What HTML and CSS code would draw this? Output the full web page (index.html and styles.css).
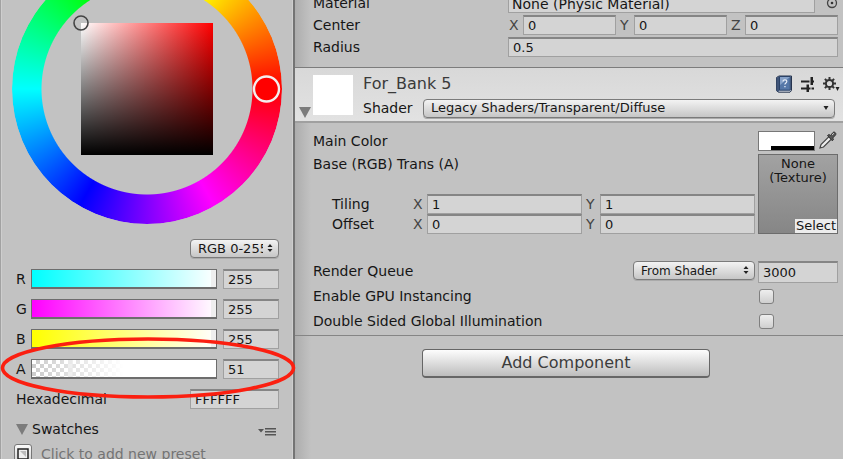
FILE: index.html
```
<!DOCTYPE html>
<html lang="en">
<head>
<meta charset="utf-8">
<title>Inspector</title>
<link rel="stylesheet" href="styles.css">
</head>
<body>
<main class="app">
  <section class="picker" aria-label="Color">
    <div class="wheel">
      <div class="hue"></div>
      <div class="shade"></div>
      <svg class="handles" viewBox="0 0 270 270" aria-hidden="true">
        <circle cx="69" cy="69" r="7" fill="none" stroke="#444" stroke-width="1.6"/>
        <circle cx="254.500" cy="135" r="12.500" fill="#f00" stroke="#f4eeee" stroke-width="2.400"/>
      </svg>
    </div>

    <div class="mode">
      <span class="dropdown mode-select">
        <select aria-label="Color mode"><option>RGB 0-255</option></select>
        <svg class="arrows" viewBox="0 0 6 10" aria-hidden="true"><path d="M3 1 5.500 4H.5zM3 9 .5 6h5z"/></svg>
      </span>
    </div>

    <div class="channels">
      <div class="channel">
        <label for="r">R</label>
        <input class="slider cyan" id="r" type="range" min="0" max="255" value="255">
        <input class="field" type="text" aria-label="R value" value="255">
      </div>
      <div class="channel">
        <label for="g">G</label>
        <input class="slider magenta" id="g" type="range" min="0" max="255" value="255">
        <input class="field" type="text" aria-label="G value" value="255">
      </div>
      <div class="channel">
        <label for="b">B</label>
        <input class="slider yellow" id="b" type="range" min="0" max="255" value="255">
        <input class="field" type="text" aria-label="B value" value="255">
      </div>
      <div class="channel">
        <label for="a">A</label>
        <input class="slider alpha" id="a" type="range" min="0" max="255" value="51">
        <input class="field" type="text" aria-label="A value" value="51">
        <svg class="marker" viewBox="0 0 296 64" aria-hidden="true"><ellipse cx="148" cy="32" rx="145.500" ry="29" fill="none" stroke="#fb1f10" stroke-width="3.600"/></svg>
      </div>
      <div class="hex">
        <label for="hex">Hexadecimal</label>
        <input class="field" id="hex" type="text" value="FFFFFF">
      </div>
    </div>

    <div class="swatches">
      <svg class="fold" viewBox="0 0 12 11" aria-hidden="true"><path d="M0 0h12L6 11z"/></svg>
      <span>Swatches</span>
      <svg class="menu" viewBox="0 0 18 10" aria-hidden="true"><path d="M0 2h6L3 5.500zM7 1h11v1.500H7zM7 4h11v1.500H7zM7 7h11v1.500H7z"/></svg>
    </div>
    <div class="preset">
      <button class="add-preset" type="button" aria-label="Add preset">
        <svg viewBox="0 0 12 12" aria-hidden="true"><path d="M1 1h10v10H1z" fill="#eee" stroke="#222" stroke-width="1.500"/><path d="M3 3l6 6V3z" fill="#bbb"/></svg>
      </button>
      <span>Click to add new preset</span>
    </div>
  </section>

  <section class="inspector" aria-label="Inspector">
    <div class="collider">
      <div class="prop">
        <label for="mat">Material</label>
        <div class="object">
          <input class="field name" id="mat" type="text" value="None (Physic Material)">
          <svg class="target" viewBox="0 0 12 12" aria-hidden="true"><circle cx="6" cy="6" r="4.500" fill="none" stroke="#444" stroke-width="1.300"/><circle cx="6" cy="6" r="1.300" fill="#333"/></svg>
        </div>
      </div>
      <div class="prop">
        <span>Center</span>
        <div class="vector">
          <label for="cx">X</label><input class="field" id="cx" type="text" value="0">
          <label for="cy">Y</label><input class="field" id="cy" type="text" value="0">
          <label for="cz">Z</label><input class="field" id="cz" type="text" value="0">
        </div>
      </div>
      <div class="prop">
        <label for="radius">Radius</label>
        <input class="field" id="radius" type="text" value="0.5">
      </div>
    </div>

    <header class="material-head">
      <svg class="fold" viewBox="0 0 12 11" aria-hidden="true"><path d="M0 0h12L6 11z"/></svg>
      <div class="thumb"></div>
      <div class="head-main">
        <div class="title-row">
          <h2>For_Bank 5</h2>
          <svg class="icon book" viewBox="0 0 18 18" aria-hidden="true">
            <path d="M1.500 2.500 4 1h12.500v14.500L15 17.200H3.500l-2-1.500z" fill="#d9dde5" stroke="#26344e"/>
            <path d="M1.500 2.500 4.500 1.500v14L3.500 17l-2-1.300z" fill="#3f5478"/>
            <path d="M4.500 1.500h10.800v13.700H4.500z" fill="#5577a8" stroke="#2b4267"/>
            <path d="M5 2h10L5 10z" fill="#86a1c8"/>
            <path d="M8 6.500c0-2.400 4-2.300 3.800 0-.1 1.500-1.900 1.400-1.900 3" fill="none" stroke="#e8eef8" stroke-width="1.200"/>
            <path d="M9.300 11h1.300v1.300H9.300z" fill="#e8eef8"/>
          </svg>
          <svg class="icon presets" viewBox="0 0 14 15" aria-hidden="true"><path d="M0 3.500h8.500v2H0zM9.500 0H12v8H9.500zM12 3.500h1v2h-1zM0 10.500h4v2H0zM5.500 7.500H8V15H5.500zM4 10.500h5.500v2H4zM10.500 10.500H13v2h-2.500z" fill="#222"/></svg>
          <svg class="icon gear" viewBox="0 0 17 15" aria-hidden="true"><circle cx="6.500" cy="6.500" r="3.600" fill="none" stroke="#333" stroke-width="2"/><path d="M6.500 0v2.500M6.500 10.500V13M0 6.500h2.500M10.500 6.500H13M1.900 1.900l1.800 1.800M9.300 9.300l1.800 1.800M1.900 11.100l1.800-1.800M9.300 3.700l1.800-1.800" stroke="#333" stroke-width="2"/><path d="M12.500 10h4l-2 4z" fill="#222"/></svg>
        </div>
        <div class="shader-row">
          <label for="shader">Shader</label>
          <span class="dropdown">
            <select id="shader"><option>Legacy Shaders/Transparent/Diffuse</option></select>
            <svg class="arrows" viewBox="0 0 6 10" aria-hidden="true"><path d="M.5 3h5L3 7z"/></svg>
          </span>
        </div>
      </div>
    </header>

    <div class="material-body">
      <div class="prop-row">
        <span>Main Color</span>
        <div class="color-field">
          <button class="color" type="button" aria-label="Main Color"><span class="alpha-bar"></span></button>
          <svg class="dropper" viewBox="0 0 18 18" aria-hidden="true"><path d="M1 17 2 13.500 10 5.500l2.500 2.500-8 8z" fill="#eee" stroke="#444" stroke-width="1.200"/><path d="M8.500 4.500 10 3.500l1.500 1L14 1.500c1.300-1.300 3.800.8 2.500 2.500l-2.800 3 .8 1.500-1.200 1.300z" fill="#555" stroke="#333"/><path d="m13 4 2-1.800" stroke="#ccc"/></svg>
        </div>
      </div>
      <div class="texture-row">
        <div class="texture-main">
          <span class="texture-label">Base (RGB) Trans (A)</span>
          <div class="tiling">
            <span>Tiling</span>
            <label for="tx">X</label><input class="field" id="tx" type="text" value="1">
            <label for="ty">Y</label><input class="field" id="ty" type="text" value="1">
          </div>
          <div class="tiling">
            <span>Offset</span>
            <label for="ox">X</label><input class="field" id="ox" type="text" value="0">
            <label for="oy">Y</label><input class="field" id="oy" type="text" value="0">
          </div>
        </div>
        <div class="texture">
          <span>None<br>(Texture)</span>
          <button type="button">Select</button>
        </div>
      </div>
      <div class="prop-row queue">
        <label for="queue">Render Queue</label>
        <span class="dropdown queue-select">
          <select id="queue"><option>From Shader</option></select>
          <svg class="arrows" viewBox="0 0 6 10" aria-hidden="true"><path d="M3 1 5.500 4H.5zM3 9 .5 6h5z"/></svg>
        </span>
        <input class="field" type="text" aria-label="Queue value" value="3000">
      </div>
      <div class="prop-row check">
        <label for="gpu">Enable GPU Instancing</label>
        <span class="check-cell"><input id="gpu" type="checkbox"></span>
      </div>
      <div class="prop-row check">
        <label for="gi">Double Sided Global Illumination</label>
        <span class="check-cell"><input id="gi" type="checkbox"></span>
      </div>
    </div>

    <div class="footer">
      <button class="add-component" type="button">Add Component</button>
    </div>
  </section>
</main>
</body>
</html>
```
FILE: styles.css
```
* { box-sizing: border-box; }

body {
  margin: 0;
  background: #c2c2c2;
  color: #161616;
  font: 14px/20px "DejaVu Sans", sans-serif;
}

input, select, button { font: inherit; color: inherit; margin: 0; }

.app {
  display: grid;
  grid-template-columns: 295px 1fr;
  height: 100vh;
  overflow: hidden;
}

/* Color picker */
.picker {
  position: relative;
  z-index: 1;
  padding: 0 14px 0 15px;
  border-left: 1px solid #a2a2a2;
  border-right: 2px solid #747474;
  box-shadow: inset 1px 0 #cecece, inset -1px 0 #cecece;
}

.wheel {
  position: relative;
  display: grid;
  place-items: center;
  width: 270px;
  height: 270px;
  margin: -46px -4px 0;
}

.hue, .shade, .handles { grid-area: 1 / 1; }

.hue {
  width: 270px;
  height: 270px;
  border-radius: 50%;
  background: conic-gradient(from 90deg, #f00, #f0f, #00f, #0ff, #0f0, #ff0, #f00);
  mask: radial-gradient(circle, transparent 105px, #000 106px);
}

.shade {
  width: 132px;
  height: 132px;
  background: linear-gradient(to bottom, transparent, #000), linear-gradient(to right, #fff, #f00);
}

.handles { width: 270px; height: 270px; z-index: 1; }

.mode { display: flex; justify-content: flex-end; padding-top: 15px; }
.mode-select { width: 89px; }

.dropdown { position: relative; display: flex; }

.dropdown select {
  appearance: none;
  width: 100%;
  height: 19px;
  padding: 0 15px 0 7px;
  border: 1px solid #7b7b7b;
  border-radius: 4px;
  background: linear-gradient(#f3f3f3, #c6c6c6);
  box-shadow: 0 1px #aaa;
  font-size: 13px;
  line-height: 16px;
}

.arrows {
  position: absolute;
  top: 4px;
  right: 6px;
  width: 6px;
  height: 10px;
  fill: #222;
}

.field {
  width: 100%;
  min-width: 0;
  height: 20px;
  padding: 0 4px;
  border: 1px solid #a0a0a0;
  border-top: 2px solid #858585;
  border-radius: 0;
  background: #d4d4d4;
  font-size: 13px;
}
.field.name { padding: 0 3px; font-size: 14px; }

.channels { display: grid; gap: 10px; padding-top: 11px; }

.channel {
  position: relative;
  display: grid;
  grid-template-columns: 15px 1fr 56px;
  height: 20px;
}

.slider {
  appearance: none;
  width: auto;
  margin-right: 6px;
  height: 20px;
  border: 1px solid #6d6d6d;
  border-bottom-width: 2px;
  min-width: 0;
}

.slider::-webkit-slider-thumb {
  appearance: none;
  width: 5px;
  height: 17px;
  background: rgba(235, 235, 235, 0.8);
}

.cyan { background: linear-gradient(to right, #0ff, #fff); }
.magenta { background: linear-gradient(to right, #f0f, #fff); }
.yellow { background: linear-gradient(to right, #ff0, #fff); }
.alpha {
  background:
    linear-gradient(to right, transparent, #fff 50%),
    repeating-conic-gradient(#ccc 0 25%, #fff 0 50%) 0 0 / 8px 8px;
}

.marker {
  position: absolute;
  top: -23px;
  left: -16px;
  width: 296px;
  height: 64px;
  pointer-events: none;
}

.hex { display: flex; justify-content: space-between; }
.hex .field { width: 89px; }

.swatches { display: flex; align-items: center; gap: 4px; padding-top: 10px; }
.fold { width: 12px; height: 11px; fill: #7c7c7c; }
.menu { width: 18px; height: 10px; margin: 5px 3px 0 auto; fill: #555; }

.preset { display: flex; align-items: center; gap: 9px; padding-top: 5px; color: #747474; }

.add-preset {
  display: grid;
  place-items: center;
  width: 18px;
  height: 20px;
  margin-left: -2px;
  padding: 0;
  border: 1px solid #777;
  border-radius: 3px;
  background: linear-gradient(#fafafa, #d0d0d0);
}
.add-preset svg { width: 12px; height: 12px; }

/* Inspector */
.inspector { background: linear-gradient(to right, #adadad, #c2c2c2 16px); }

.collider {
  display: grid;
  gap: 2px;
  margin-top: -7px;
  padding: 0 5px 10px 18px;
  border-bottom: 1px solid #7c7c7c;
}

.prop { display: grid; grid-template-columns: 195px 1fr; }
.object { display: grid; grid-template-columns: 1fr 23px; align-items: center; }
.target { width: 12px; height: 12px; justify-self: end; }

.vector {
  display: grid;
  grid-template-columns: 10px 1fr 10px 1fr 10px 1fr;
  column-gap: 4px;
  padding-left: 1px;
}
.vector label, .tiling label { color: #444; }

.material-head {
  display: grid;
  grid-template-columns: 12px 40px 1fr;
  column-gap: 2px;
  height: 55px;
  padding: 7px 8px 0 4px;
  background: linear-gradient(#d8d8d8, #e2e2e2);
  border-bottom: 2px solid #a0a0a0;
}
.material-head .fold { margin-top: 32px; }
.thumb { height: 40px; background: #fff; }

.head-main { padding-left: 8px; }
.title-row { display: flex; align-items: center; gap: 8px; height: 18px; }

h2 {
  flex: 1;
  margin: 0;
  font-size: 16px;
  font-weight: 400;
  color: #3a3a3a;
}

.icon { flex: none; }
.book { width: 18px; height: 18px; }
.presets { width: 14px; height: 15px; }
.gear { width: 17px; height: 15px; margin-right: -5px; }

.shader-row { display: grid; grid-template-columns: 60px 1fr; align-items: center; padding-top: 5px; }

.material-body { padding: 8px 5px 4px 18px; border-bottom: 1px solid #858585; }

.prop-row { display: flex; justify-content: space-between; gap: 3px; }

.color-field { display: flex; gap: 4px; width: 80px; }

.color {
  display: flex;
  align-items: flex-end;
  width: 57px;
  height: 20px;
  padding: 0 0 0 12px;
  border: 1px solid #777;
  background: #fff;
}
.alpha-bar { flex: 1; height: 4px; background: #000; }
.dropper { width: 18px; height: 18px; }

.texture-row { display: grid; grid-template-columns: 1fr 80px; gap: 3px; padding-top: 3px; }
.texture-label { display: block; height: 40px; }

.tiling {
  display: grid;
  grid-template-columns: 77px 10px 1fr 10px 1fr;
  column-gap: 4px;
  padding-left: 19px;
}

.texture {
  display: flex;
  flex-direction: column;
  justify-content: space-between;
  height: 80px;
  padding-top: 2px;
  border: 1px solid #6c6c6c;
  background: linear-gradient(#a2a2a2, #868686);
  text-align: center;
  font-size: 13px;
  line-height: 14px;
}
.texture button {
  align-self: flex-end;
  height: 14px;
  padding: 0 1px;
  border: 0;
  background: #ececec;
}

.queue { padding-top: 27px; }
.queue > label { flex: 1; }
.queue-select { width: 122px; }
.queue-select select { font-size: 12px; }
.queue .field { width: 80px; height: 22px; }

.check { padding-top: 3px; }
.check + .check { padding-top: 5px; }
.check-cell { display: flex; align-items: center; width: 79px; }

input[type="checkbox"] {
  appearance: none;
  width: 15px;
  height: 15px;
  border: 1px solid #7f7f7f;
  border-radius: 3px;
  background: linear-gradient(#eee, #cfcfcf);
}

.footer { display: flex; justify-content: center; padding: 13px 6px 0 0; }

.add-component {
  width: 288px;
  height: 29px;
  border: 1px solid #666;
  border-bottom-width: 2px;
  border-radius: 4px;
  background: linear-gradient(#fdfdfd, #bdbdbd);
  color: #3c3c3c;
  font-size: 16px;
}
```
